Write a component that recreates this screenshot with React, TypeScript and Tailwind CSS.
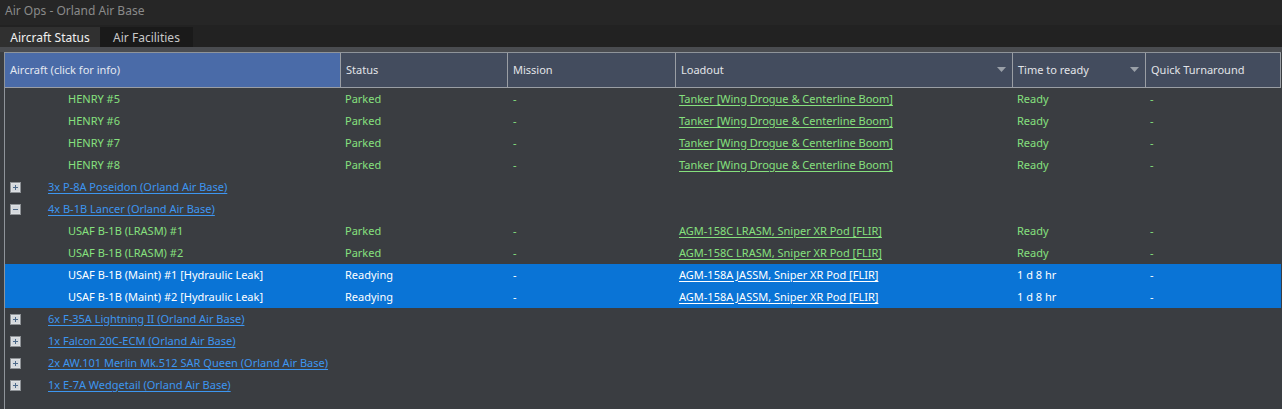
import React from "react";

type Child = {
  name: string;
  status: string;
  loadout: string;
  ready: string;
  selected?: boolean;
};

type Row =
  | { kind: "child"; data: Child }
  | { kind: "group"; label: string; open: boolean };

const COLS = "grid-cols-[336px_167px_168px_337px_133px_135px]";

const ROWS: Row[] = [
  { kind: "child", data: { name: "HENRY #5", status: "Parked", loadout: "Tanker [Wing Drogue & Centerline Boom]", ready: "Ready" } },
  { kind: "child", data: { name: "HENRY #6", status: "Parked", loadout: "Tanker [Wing Drogue & Centerline Boom]", ready: "Ready" } },
  { kind: "child", data: { name: "HENRY #7", status: "Parked", loadout: "Tanker [Wing Drogue & Centerline Boom]", ready: "Ready" } },
  { kind: "child", data: { name: "HENRY #8", status: "Parked", loadout: "Tanker [Wing Drogue & Centerline Boom]", ready: "Ready" } },
  { kind: "group", label: "3x P-8A Poseidon (Orland Air Base)", open: false },
  { kind: "group", label: "4x B-1B Lancer (Orland Air Base)", open: true },
  { kind: "child", data: { name: "USAF B-1B (LRASM) #1", status: "Parked", loadout: "AGM-158C LRASM, Sniper XR Pod [FLIR]", ready: "Ready" } },
  { kind: "child", data: { name: "USAF B-1B (LRASM) #2", status: "Parked", loadout: "AGM-158C LRASM, Sniper XR Pod [FLIR]", ready: "Ready" } },
  { kind: "child", data: { name: "USAF B-1B (Maint) #1 [Hydraulic Leak]", status: "Readying", loadout: "AGM-158A JASSM, Sniper XR Pod [FLIR]", ready: "1 d 8 hr", selected: true } },
  { kind: "child", data: { name: "USAF B-1B (Maint) #2 [Hydraulic Leak]", status: "Readying", loadout: "AGM-158A JASSM, Sniper XR Pod [FLIR]", ready: "1 d 8 hr", selected: true } },
  { kind: "group", label: "6x F-35A Lightning II (Orland Air Base)", open: false },
  { kind: "group", label: "1x Falcon 20C-ECM (Orland Air Base)", open: false },
  { kind: "group", label: "2x AW.101 Merlin Mk.512 SAR Queen (Orland Air Base)", open: false },
  { kind: "group", label: "1x E-7A Wedgetail (Orland Air Base)", open: false },
];

function ExpandBox({ open }: { open: boolean }) {
  return (
    <svg width="11" height="11" viewBox="0 0 11 11" className="shrink-0">
      <rect x="0.5" y="0.5" width="10" height="10" fill="#e6e8ea" stroke="#8e9296" />
      <rect x="1.5" y="1.5" width="8" height="8" fill="#d4d8dc" />
      <rect x="3" y="5" width="5" height="1" fill="#4d6a8a" />
      {!open && <rect x="5" y="3" width="1" height="5" fill="#4d6a8a" />}
    </svg>
  );
}

function SortArrow() {
  return (
    <svg width="9" height="5" viewBox="0 0 9 5" className="ml-auto mr-[6px]">
      <path d="M0 0 L9 0 L4.5 5 Z" fill="#9aa0a8" />
    </svg>
  );
}

function HeaderCell({ label, first, arrow }: { label: string; first?: boolean; arrow?: boolean }) {
  return (
    <div
      className={
        "flex h-[34px] items-center border-r border-[#9a9ea4] pb-[1px] pl-[5px] " +
        (first ? "bg-[#4a6ba8] text-[#e4e8f0]" : "bg-[#434c5e] text-[#e2e4e8]")
      }
    >
      {label}
      {arrow && <SortArrow />}
    </div>
  );
}

function ChildRow({ d }: { d: Child }) {
  const txt = d.selected ? "text-white" : "text-[#86e07e]";
  return (
    <div className={"grid h-[22px] items-center pb-[2px] " + COLS + " " + (d.selected ? "bg-[#0a74d6]" : "")}>
      <div className={"pl-[63px] " + txt}>{d.name}</div>
      <div className={"pl-[4px] " + txt}>{d.status}</div>
      <div className={"pl-[5px] " + txt}>-</div>
      <div className={"pl-[3px] " + txt}>
        <span className="underline underline-offset-2">{d.loadout}</span>
      </div>
      <div className={"pl-[4px] " + txt}>{d.ready}</div>
      <div className={"pl-[4px] " + txt}>-</div>
    </div>
  );
}

function GroupRow({ label, open }: { label: string; open: boolean }) {
  return (
    <div className="flex h-[22px] items-center pl-[5px]">
      <ExpandBox open={open} />
      <span className="mb-[2px] ml-[27px] text-[#3d96f0] underline underline-offset-2">{label}</span>
    </div>
  );
}

export default function App() {
  return (
    <div
      className="h-[409px] w-[1282px] overflow-hidden bg-[#262626] text-[11px] leading-none"
      style={{ fontFamily: '"Noto Sans", "Open Sans", sans-serif' }}
    >
      <div className="flex h-[25px] items-center pl-[5px] pb-[3px] text-[12px] text-[#8a8a8a]">
        Air Ops - Orland Air Base
      </div>
      <div className="flex h-[22px] items-end bg-[#222222]">
        <div className="flex h-[20px] w-[100px] items-center justify-center bg-[#303030] pt-[2px] text-[12px] text-[#f0f0f0]">
          Aircraft Status
        </div>
        <div className="flex h-[20px] w-[93px] items-center justify-center bg-[#1a1a1a] pt-[2px] text-[12px] text-[#c8c8c8]">
          Air Facilities
        </div>
      </div>
      <div className="h-[362px] border-t-[5px] border-[#4a4c50] bg-[#3a3d41] pl-[4px]">
        <div className="h-full w-[1277px] border-l border-t border-[#8f949a]">
          <div className={"grid border-b border-[#9a9ea4] " + COLS}>
            <HeaderCell label="Aircraft (click for info)" first />
            <HeaderCell label="Status" />
            <HeaderCell label="Mission" />
            <HeaderCell label="Loadout" arrow />
            <HeaderCell label="Time to ready" arrow />
            <HeaderCell label="Quick Turnaround" />
          </div>
          {ROWS.map((r, i) =>
            r.kind === "child" ? (
              <ChildRow key={i} d={r.data} />
            ) : (
              <GroupRow key={i} label={r.label} open={r.open} />
            )
          )}
        </div>
      </div>
    </div>
  );
}
